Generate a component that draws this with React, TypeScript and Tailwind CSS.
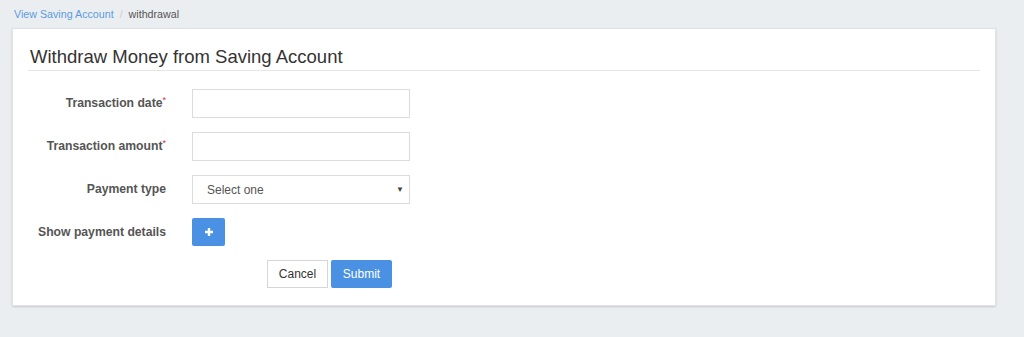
import React from 'react';

const FONT = { fontFamily: '"Liberation Sans", Arial, sans-serif' };

const Field: React.FC<{ label: string; required?: boolean; children: React.ReactNode }> = ({ label, required, children }) => (
  <div className="flex items-center h-[29px]">
    <label className="w-[138px] text-right text-[12.2px] font-bold text-[#555]">
      {label}
      {required && <span className="text-[#c9302c] font-normal text-[9px] align-top">*</span>}
    </label>
    <div className="ml-[26px]">{children}</div>
  </div>
);

const App: React.FC = () => {
  return (
    <div className="w-[1024px] h-[337px] bg-[#ebeef1] overflow-hidden" style={FONT}>
      <div className="flex items-center gap-[6px] h-[28px] pl-[14px] text-[10.7px]">
        <a className="text-[#5b9be0]">View Saving Account</a>
        <span className="text-[#ccc]">/</span>
        <span className="text-[#555]">withdrawal</span>
      </div>

      <div className="ml-[12px] w-[984px] h-[278px] bg-white border border-[#dfe2e5] shadow-[0_1px_2px_rgba(0,0,0,0.15)] px-[15px] pt-[15px]">
        <h2 className="text-[18.5px] leading-[26px] text-[#333] pl-[2px] border-b border-[#e6e6e6]">
          Withdraw Money from Saving Account
        </h2>

        <div className="flex flex-col gap-[14px] mt-[18px]">
          <Field label="Transaction date" required>
            <input className="w-[218px] h-[29px] border border-[#dcdcdc] outline-none px-2 text-[12px]" />
          </Field>
          <Field label="Transaction amount" required>
            <input className="w-[218px] h-[29px] border border-[#dcdcdc] outline-none px-2 text-[12px]" />
          </Field>
          <Field label="Payment type">
            <div className="w-[218px] h-[29px] border border-[#dcdcdc] flex items-center justify-between pl-[14px] pr-[5px] text-[12px] text-[#555]">
              <span>Select one</span>
              <span className="text-[8px] text-[#444]">▼</span>
            </div>
          </Field>
          <div className="flex items-center h-[28px]">
            <span className="w-[138px] text-right text-[12.2px] font-bold text-[#555]">Show payment details</span>
            <button className="ml-[26px] w-[33px] h-[28px] bg-[#4a91e3] rounded-[2px] flex items-center justify-center">
              <svg width="10" height="10" viewBox="0 0 10 10">
                <path d="M5 1v8M1 5h8" stroke="white" strokeWidth="2.4" />
              </svg>
            </button>
          </div>
          <div className="flex h-[28px] ml-[239px] gap-[3px]">
            <button className="w-[61px] h-[28px] border border-[#d6d6d6] bg-white text-[12px] text-[#333]">Cancel</button>
            <button className="w-[61px] h-[28px] bg-[#4a91e3] text-[12px] text-white rounded-[2px]">Submit</button>
          </div>
        </div>
      </div>
    </div>
  );
};

export default App;
